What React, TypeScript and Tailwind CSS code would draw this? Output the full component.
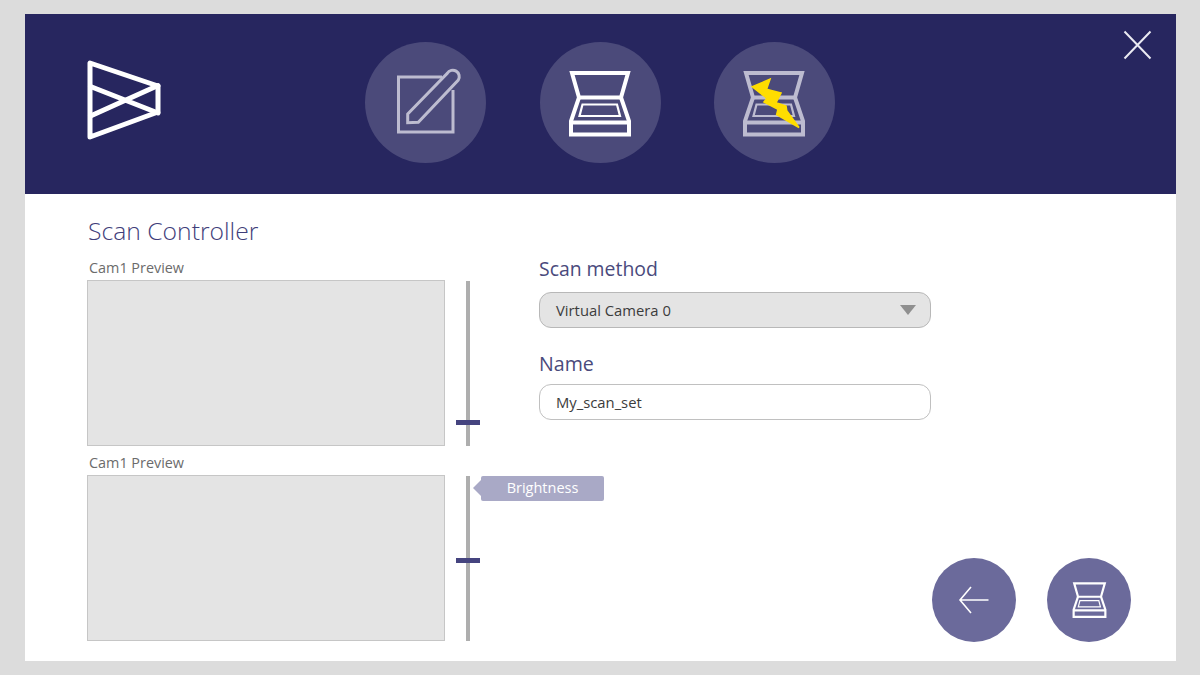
const font = { fontFamily: '"Open Sans", sans-serif' }

const Logo = () => (
  <svg width="74" height="80" viewBox="87 60 74 80" fill="none" stroke="#fff" strokeWidth="5" strokeLinejoin="round" strokeLinecap="round">
    <path d="M90 63V137L158 112V86Z" />
    <path d="M90.5 86.5L158 113M90.5 116L158 85.5" />
  </svg>
)

const EditIcon = () => (
  <svg width="121" height="121" viewBox="0 0 121 121" fill="none" stroke="#bdbcd0" strokeWidth="3">
    <path d="M77 35H33.5V90H88V48" />
    <path d="M42.7 72L82.3 31.3A5.8 5.8 0 0 1 93.3 38L53.3 80.3L42.7 80.7Z" />
  </svg>
)

const ScannerLines = () => (
  <>
    <path strokeWidth="4" d="M32 31H88L81 55.5H39Z" />
    <path strokeWidth="4" d="M39 55.5L31 79V92.5H89V79L81 55.5" />
    <path strokeWidth="4" d="M31 80.5H89" />
    <path strokeWidth="2.2" d="M42.5 62.5H77L80 74H39.5Z" />
  </>
)

const Scanner = ({ className }: { className?: string }) => (
  <svg className={className} viewBox="28 27 64 69" fill="none" stroke="#fff">
    <ScannerLines />
  </svg>
)

const BoltScanner = () => (
  <svg width="121" height="121" viewBox="0 0 121 121" fill="none">
    <g stroke="#bdbcd0">
      <ScannerLines />
    </g>
    <path
      fill="#ffdd00"
      stroke="#ffdd00"
      strokeWidth="1.6"
      d="M38.3 44.7L56 37.3L52.5 47.3L67 51L62 60.7L72 64L72.7 68.7L85 85.5L62.7 72.5L64 67.3L50 60L53 56.3Z"
    />
  </svg>
)

const NavCircle = ({ children }: { children: React.ReactNode }) => (
  <div className="w-[121px] h-[121px] rounded-full bg-[#4b4a7a] shrink-0">{children}</div>
)

const Preview = ({ handleTop, children }: { handleTop: string; children?: React.ReactNode }) => (
  <div className="flex gap-[21px]">
    <div className="w-[358px] h-[166px] bg-[#e4e4e4] border border-[#c6c6c6]" />
    <div className="relative w-[4px] h-[165px] mt-[1px] bg-[#aeaeae]">
      <div className={`absolute left-[-10px] w-[24px] h-[5px] bg-[#45447f] ${handleTop}`} />
      {children}
    </div>
  </div>
)

const App = () => {
  return (
    <div className="w-[1200px] h-[675px] bg-[#dcdcdc] pt-[14px] pl-[25px] overflow-hidden" style={font}>
      <div className="w-[1151px] h-[647px] bg-white flex flex-col">
        <header className="h-[180px] bg-[#27265f] flex items-start pl-[62px] pr-[24px]">
          <div className="mt-[46px]">
            <Logo />
          </div>
          <nav className="flex gap-[53.5px] ml-[204px] mt-[28px]">
            <NavCircle>
              <EditIcon />
            </NavCircle>
            <NavCircle>
              <Scanner className="w-[64px] h-[69px] ml-[28px] mt-[27px]" />
            </NavCircle>
            <NavCircle>
              <BoltScanner />
            </NavCircle>
          </nav>
          <svg className="ml-auto mt-[16px]" width="30" height="30" viewBox="0 0 30 30" stroke="#eaeaf2" strokeWidth="2">
            <path d="M2.5 1.5L28.5 28.5M28.5 1.5L2.5 28.5" />
          </svg>
        </header>

        <main className="flex flex-1 pl-[62px] pr-[45px]">
          <section className="w-[383px] shrink-0">
            <h1 className="mt-[19px] text-[24.7px] leading-[36px] font-[350] text-[#3f3e7a] pl-[1px]">Scan Controller</h1>
            <div className="mt-[9px] mb-[2px] text-[14.4px] leading-[20px] text-[#6b6b6b] pl-[2px]">Cam1 Preview</div>
            <Preview handleTop="top-[139px]" />
            <div className="mt-[7px] mb-[2px] text-[14.4px] leading-[20px] text-[#6b6b6b] pl-[2px]">Cam1 Preview</div>
            <Preview handleTop="top-[82px]">
              <div className="absolute left-[15px] top-[0px] w-[123px] h-[25px] bg-[#a9a9c6] rounded-[2px] flex items-center justify-center pb-[1px] text-[14.5px] text-white">
                <span className="absolute left-[-8px] top-[4px] border-y-[8px] border-r-[8px] border-y-transparent border-r-[#a9a9c6]" />
                Brightness
              </div>
            </Preview>
          </section>

          <section className="flex-1 ml-[69px] flex flex-col">
            <div className="w-[392px] pt-[61px]">
              <label className="block text-[19.4px] leading-[28px] text-[#4a4a7c]">Scan method</label>
              <div className="mt-[9px] h-[36px] rounded-[12px] bg-[#e4e4e4] border border-[#b8b8b8] flex items-center justify-between pl-[16px] pr-[14px] text-[14.8px] text-[#3c3c3c]">
                <span>Virtual Camera 0</span>
                <span className="border-x-[8px] border-t-[10px] border-x-transparent border-t-[#8f8f8f]" />
              </div>
              <label className="block mt-[22px] text-[19.6px] leading-[28px] text-[#4a4a7c]">Name</label>
              <div className="mt-[6px] h-[36px] rounded-[12px] bg-white border border-[#c0c0c0] flex items-center pl-[16px] text-[14.8px] text-[#3c3c3c]">
                My_scan_set
              </div>
            </div>
            <div className="mt-auto mb-[19px] self-end flex gap-[31px]">
              <div className="w-[84px] h-[84px] rounded-full bg-[#6b6a9b] flex items-center justify-center">
                <svg width="32" height="30" viewBox="0 0 32 30" fill="none" stroke="#fff" strokeWidth="1.6">
                  <path d="M30.5 15H2M13 2L2 15L13 28" />
                </svg>
              </div>
              <div className="w-[84px] h-[84px] rounded-full bg-[#6b6a9b] flex items-center justify-center">
                <Scanner className="w-[35px] h-[38px]" />
              </div>
            </div>
          </section>
        </main>
      </div>
    </div>
  )
}

export default App
